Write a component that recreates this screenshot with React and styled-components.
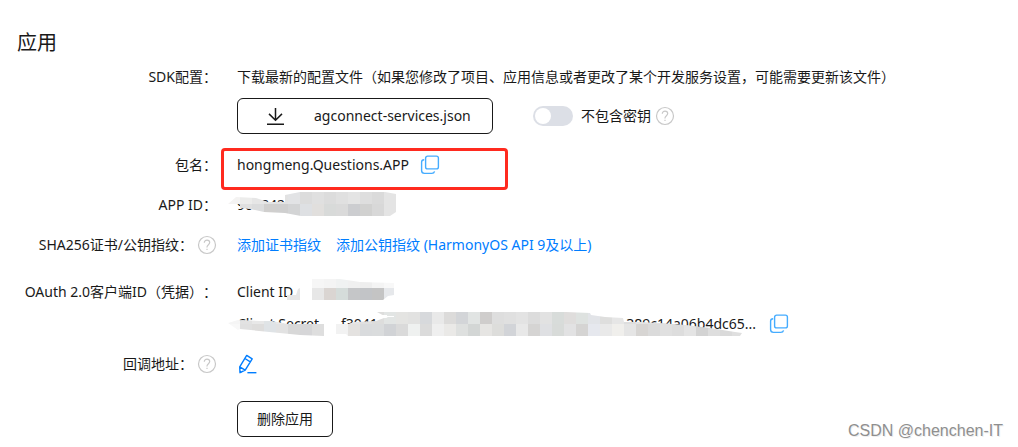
import React from "react";
import styled, { createGlobalStyle } from "styled-components";

const GlobalStyle = createGlobalStyle`
  *, *::before, *::after { box-sizing: border-box; }
  body {
    margin: 0;
    background: #fff;
    color: #191919;
    font-family: "Noto Sans", "Noto Sans CJK SC", sans-serif;
    font-size: 14px;
    line-height: 24px;
    text-spacing-trim: space-all;
  }
`;

const Page = styled.main`
  position: relative;
  padding: 27px 16px 10px 0;
`;

const Title = styled.h1`
  margin: 0 0 6px;
  padding-left: 17px;
  font-size: 20px;
  font-weight: 400;
  line-height: 32px;
`;

const Rows = styled.dl`
  display: flex;
  flex-direction: column;
  gap: 16px;
  margin: 0;
`;

const Row = styled.div`
  display: grid;
  grid-template-columns: 217px minmax(0, 1fr);
  column-gap: 20px;
  margin-top: ${(p) => p.$space || 0}px;
`;

const Term = styled.dt`
  display: flex;
  justify-content: flex-end;
  align-items: center;
  gap: 4px;
  height: 24px;
  white-space: nowrap;
`;

const Value = styled.dd`
  display: flex;
  flex-direction: column;
  align-items: flex-start;
  gap: 8px;
  grid-column: 2;
  margin: 0;
`;

const Line = styled.div`
  position: relative;
  display: flex;
  align-items: center;
  gap: ${(p) => p.$gap || 0}px;
  min-height: ${(p) => (p.$tall ? 38 : 24)}px;
  white-space: nowrap;
`;

const Button = styled.button`
  display: inline-flex;
  align-items: center;
  justify-content: center;
  height: 36px;
  padding: 0 19px;
  border: 1px solid #191919;
  border-radius: 6px;
  background: #fff;
  color: inherit;
  font: inherit;
  cursor: pointer;
`;

const DownloadButton = styled(Button)`
  width: 256px;
  justify-content: flex-start;
  gap: 28px;
  padding-left: 28px;
`;

const IconButton = styled.button`
  display: inline-flex;
  padding: 0;
  border: 0;
  background: none;
  color: ${(p) => p.$color || "#45acff"};
  cursor: pointer;
`;

const SwitchLabel = styled.label`
  display: flex;
  align-items: center;
  gap: 8px;
  margin-left: 40px;
  margin-right: 4px;
`;

const Switch = styled.input`
  appearance: none;
  width: 40px;
  height: 20px;
  margin: 0;
  padding: 2px;
  border-radius: 10px;
  background: #dcdfe6;
  cursor: pointer;
  &::before {
    content: "";
    display: block;
    width: 16px;
    height: 16px;
    border-radius: 50%;
    background: #fff;
  }
  &:checked { background: #007dff; }
  &:checked::before { margin-left: auto; }
`;

const Link = styled.a`
  color: #007dff;
  text-decoration: none;
`;

const Highlight = styled.span`
  position: absolute;
  left: -16px;
  top: -5px;
  width: 287px;
  height: 42px;
  border: 3px solid #ff2a1f;
  border-radius: 4px;
  pointer-events: none;
`;

const Redaction = styled.svg`
  position: absolute;
  left: -9px;
  top: -2px;
  pointer-events: none;
`;

const SecretLabel = styled.span`
  width: 104px;
`;

const SecretText = styled.span`
  display: flex;
  justify-content: space-between;
  width: 415px;
  margin-right: 13px;
`;

const Watermark = styled.footer`
  position: absolute;
  right: 15px;
  bottom: 4px;
  color: #8f8f8f;
  font-family: "Liberation Sans", sans-serif;
  font-size: 16px;
  text-shadow: 1px 1px 0 #eee;
`;

const HelpIcon = () => (
  <IconButton type="button" aria-label="帮助" $color="#c8c8c8">
    <svg width="20" height="20" viewBox="0 0 20 20" fill="none" stroke="currentColor" strokeWidth="1.2">
      <circle cx="10" cy="10" r="8.5" />
      <path d="M7.3 7.8C7.3 6.1 8.4 5.1 10 5.1c1.6 0 2.7 1 2.7 2.5 0 2-2.7 2.2-2.7 4.5v.3M10 13.8v1.3" />
    </svg>
  </IconButton>
);

const CopyIcon = () => (
  <IconButton type="button" aria-label="复制">
    <svg width="20" height="20" viewBox="0 0 20 20" fill="none" stroke="currentColor" strokeWidth="1.4">
      <rect x="5.6" y="1.1" width="12.8" height="12.8" rx="2" />
      <path d="M4.2 4.7C2.6 4.7 1.6 5.5 1.6 6.9v8.7c0 1.8 1 2.8 2.8 2.8h7.4c1.6 0 2.4-.6 2.8-2" />
    </svg>
  </IconButton>
);

const DownloadIcon = () => (
  <svg width="20" height="20" viewBox="0 0 20 20" fill="none" stroke="currentColor" strokeWidth="1.5">
    <path d="M9.5 2v12M3 7.9l6.5 6.3L16 7.9M1 18.3h17" />
  </svg>
);

const EditIcon = () => (
  <IconButton type="button" aria-label="编辑" $color="#007dff">
    <svg width="20" height="20" viewBox="0 0 20 20" fill="none" stroke="currentColor" strokeWidth="1.4" strokeLinejoin="round">
      <path d="M9.7 1.4 15.2 4.8 8.2 16.1 3 18.7 2.7 12.8zM7.9 4.5l5.4 3.3M2.7 12.8l5.5 3.3M3 16.4v2.3l2-.9" />
      <path d="M10.4 18.7h9" />
    </svg>
  </IconButton>
);

const CELL = 12;

/* Pixelated cover: rows of 12px cells, trimmed to an outline. */
function Mosaic({ id, width, height, originX = 0, originY = 0, rows, shapes, gaps = [] }) {
  return (
    <Redaction width={width} height={height} aria-hidden="true" shapeRendering="crispEdges">
      <clipPath id={id}>
        {shapes.map((points) => <polygon key={points} points={points} />)}
      </clipPath>
      <g clipPath={`url(#${id})`}>
        {rows.map((row, r) =>
          row.split(" ").map((tone, c) => (
            <rect
              key={`${r}-${c}`}
              x={originX + c * CELL}
              y={originY + r * CELL}
              width={CELL}
              height={CELL}
              fill={`#${tone}`}
            />
          ))
        )}
      </g>
      {gaps.map((points) => <polygon key={points} points={points} fill="#fff" />)}
    </Redaction>
  );
}

export default function App() {
  return (
    <>
      <GlobalStyle />
      <Page>
        <Title>应用</Title>
        <Rows>
          <Row>
            <Term>SDK配置：</Term>
            <Value>
              <Line>下载最新的配置文件（如果您修改了项目、应用信息或者更改了某个开发服务设置，可能需要更新该文件）</Line>
              <Line $tall>
                <DownloadButton type="button">
                  <DownloadIcon />
                  agconnect-services.json
                </DownloadButton>
                <SwitchLabel>
                  <Switch type="checkbox" role="switch" />
                  不包含密钥
                </SwitchLabel>
                <HelpIcon />
              </Line>
            </Value>
          </Row>
          <Row $space={2}>
            <Term>包名：</Term>
            <Value>
              <Line $gap={11}>
                hongmeng.Questions.APP
                <CopyIcon />
                <Highlight />
              </Line>
            </Value>
          </Row>
          <Row>
            <Term>APP ID：</Term>
            <Value>
              <Line>
                9018420
                <Mosaic
                  id="app-id"
                  width={170}
                  height={26}
                  originY={1}
                  rows={[
                    "f4f3f2 ececeb e6e6e6 e4e4e4 e2e2e2 e2e3e5 dcdcdc e0e0e0 dcdcdc e0e0e0 e4e4e4 dedede dadada e4e4e4",
                    "fafaf7 e0e0e0 dbdcdd d0cfce cfcfcf d3d4d5 dee0e3 e1dfdd d8dad9 dadada cccdd0 d1d1d0 d8d8d8 e4e4e4",
                  ]}
                  shapes={["0,13 8,6 28,7 40,11 57,11 57,4 72,1 157,1 168,3 168,21 162,25 73,25 57,22 36,21 22,18 12,17 12,13"]}
                />
              </Line>
            </Value>
          </Row>
          <Row>
            <Term>
              SHA256证书/公钥指纹：
              <HelpIcon />
            </Term>
            <Value>
              <Line $gap={15}>
                <Link href="#certificate">添加证书指纹</Link>
                <Link href="#public-key">添加公钥指纹 (HarmonyOS API 9及以上)</Link>
              </Line>
            </Value>
          </Row>
          <Row $space={7}>
            <Term>OAuth 2.0客户端ID（凭据）：</Term>
            <Value>
              <Line>
                Client ID
                <Mosaic
                  id="client-id"
                  width={170}
                  height={24}
                  originY={-2}
                  rows={[
                    "f4f4f4 f4f4f4 f4f4f4 f4f4f4 f4f4f4 f4f4f4 f4f4f4 f6f6f6 f4f4f4 f0f2f2 f0f0f0 eeeeee f4f4f4 f8f8f8",
                    "e7e7e7 e7e7e7 e7e7e7 e7e7e7 e7e7e7 e7e7e7 e7e7e7 e7e7e7 dad5d2 d5dcda c5c6c8 c2c4c7 c4c4c4 e6e8eb",
                  ]}
                  shapes={[
                    "59,22 59,17 68,17 70,11 72,10 72,22",
                    "84,1 112,1 132,4 166,5 166,17 160,18 155,22 84,22",
                  ]}
                />
              </Line>
              <Line>
                <SecretLabel>Client Secret</SecretLabel>
                <SecretText>
                  <span>f3041</span>
                  <span>389c14a06b4dc65...</span>
                </SecretText>
                <CopyIcon />
                <Mosaic
                  id="client-secret"
                  width={530}
                  height={28}
                  originY={2}
                  rows={[
                    "f5f5f5 e2e2e2 e8e8e8 e0e4e6 e8e8e8 dedede e8e8e8 f2f2f2 f2f2f2 f0f0f0 e6e6e6 e0e0e0 dddddc e2e5e4 e4e4e2 e2e2e1 d7d9dc e9e9e9 dcdbda d3d5d8 e1e4e3 cfcdcc dedede e0e0e0 e3e3e3 dcdcdc e2e2e2 d8dcda dfdddc dee2e0 e2e4e8 dededd e6e6e6 dedede e4e4e4 e0e0e0 dadada e0e0e0 dedede dddddd dbdbdb d9d9d9 dddddd",
                    "f8f8f8 e0e0e0 dedddc dfe3e6 e2e2e2 d8d8d8 d6d6d8 dedede f2f2f2 f2f2f2 e4e2e0 d9dbdd dadcdd d1d3d6 dadada eff1f0 dbdbdb efefef eae9e7 dee0df d3d6d5 e6e5e3 dddddb d2d4d8 e8e8e8 d5d4d3 dfe0e3 d8dbd9 e2e2e3 d5d4d3 e6e8ee e9e9e9 f0efec e5e5e5 d7d5d3 dbdbdb e0e0e0 dddddd e4e4e4 d3d3d3 dedede dadada dfdfdf",
                  ]}
                  shapes={[
                    "0,13 10,10 32,11 44,11 60,14 96,14 96,26 72,25 12,19 10,20",
                    "108,14 120,14 126,12 148,11 156,8 160,8 149,2 338,2 362,3 363,5 377,7 395,8 396,12 412,12 432,13 458,15 482,18 507,22 514,23 512,26 120,26 118,24 108,24",
                  ]}
                  gaps={["152,5 166,6 166,7 154,7"]}
                />
              </Line>
            </Value>
          </Row>
          <Row>
            <Term>
              回调地址：
              <HelpIcon />
            </Term>
            <Value>
              <Line>
                <EditIcon />
              </Line>
            </Value>
          </Row>
          <Row $space={9}>
            <Value>
              <Button type="button">删除应用</Button>
            </Value>
          </Row>
        </Rows>
        <Watermark>CSDN @chenchen-IT</Watermark>
      </Page>
    </>
  );
}
